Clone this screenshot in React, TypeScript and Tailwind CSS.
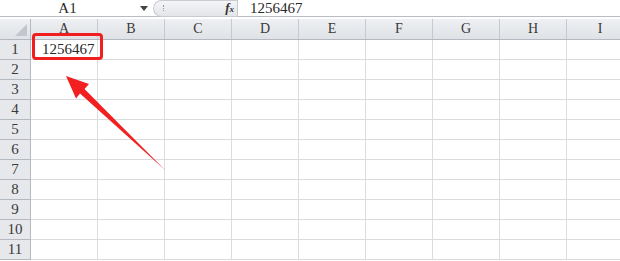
import React from "react"

const cols = ["A", "B", "C", "D", "E", "F", "G", "H", "I"]
const rows = [1, 2, 3, 4, 5, 6, 7, 8, 9, 10, 11]

export default function App() {
  return (
    <div className="relative w-[620px] h-[261px] overflow-hidden bg-white font-['Liberation_Serif',serif] text-[15px] text-[#2a2a2a]">
      {/* name box + formula bar */}
      <div className="flex h-[17px] items-center border-b border-[#b9bdc3]">
        <div className="w-[135px] text-center leading-[16px]">A1</div>
        <div className="w-[18px] flex justify-center">
          <svg width="8" height="5" viewBox="0 0 8 5"><path d="M0 0h8L4 5z" fill="#444" /></svg>
        </div>
        <div className="flex h-[17px] w-[84px] items-center rounded-l-full border border-r-0 border-[#c8cbd0] bg-gradient-to-b from-[#f4f5f7] to-[#e3e5e8]">
          <div className="ml-[9px] h-[6px] w-[2px] border-l border-dotted border-[#999]" />
          <span className="ml-auto mr-[3px] italic font-bold text-[13px] text-[#333]">f<span className="text-[9px]">x</span></span>
        </div>
        <div className="h-[17px] border-l border-[#c8cbd0]" />
        <div className="pl-[12px] leading-[16px]">1256467</div>
      </div>
      <div className="h-[2px]" />
      {/* header row */}
      <div className="flex h-[21px] border-b border-[#b4b9c0] bg-gradient-to-b from-[#eef0f3] to-[#dfe2e6] text-[#3a3a3a] text-[14px]">
        <div className="relative w-[31px] shrink-0 border-r border-[#b4b9c0]">
          <svg className="absolute right-[3px] bottom-[3px]" width="12" height="12" viewBox="0 0 12 12"><path d="M12 0V12H0z" fill="#c3c7cc" /></svg>
        </div>
        {cols.map((c) => (
          <div key={c} className="w-[67px] shrink-0 border-r border-[#c6cad0] text-center leading-[20px]">{c}</div>
        ))}
      </div>
      {/* rows */}
      {rows.map((r) => (
        <div key={r} className="flex h-[20px]">
          <div className="w-[31px] shrink-0 border-r border-b border-[#b4b9c0] bg-[#e6e8ec] text-center leading-[19px] text-[#3a3a3a]">{r}</div>
          {cols.map((c) => (
            <div key={c} className="w-[67px] shrink-0 border-r border-b border-[#dadcdf] leading-[19px] pl-[11px]">
              {r === 1 && c === "A" ? "1256467" : ""}
            </div>
          ))}
        </div>
      ))}
      {/* annotation */}
      <div className="absolute left-[32px] top-[33px] h-[27px] w-[71px] rounded-[4px] border-[3px] border-[#f01e1e]" />
      <svg className="absolute left-0 top-0" width="620" height="261" viewBox="0 0 620 261">
        <polygon points="66,76 89,84 84.5,89 165,170 80,93.5 76,98.5" fill="#f22020" />
      </svg>
    </div>
  )
}
